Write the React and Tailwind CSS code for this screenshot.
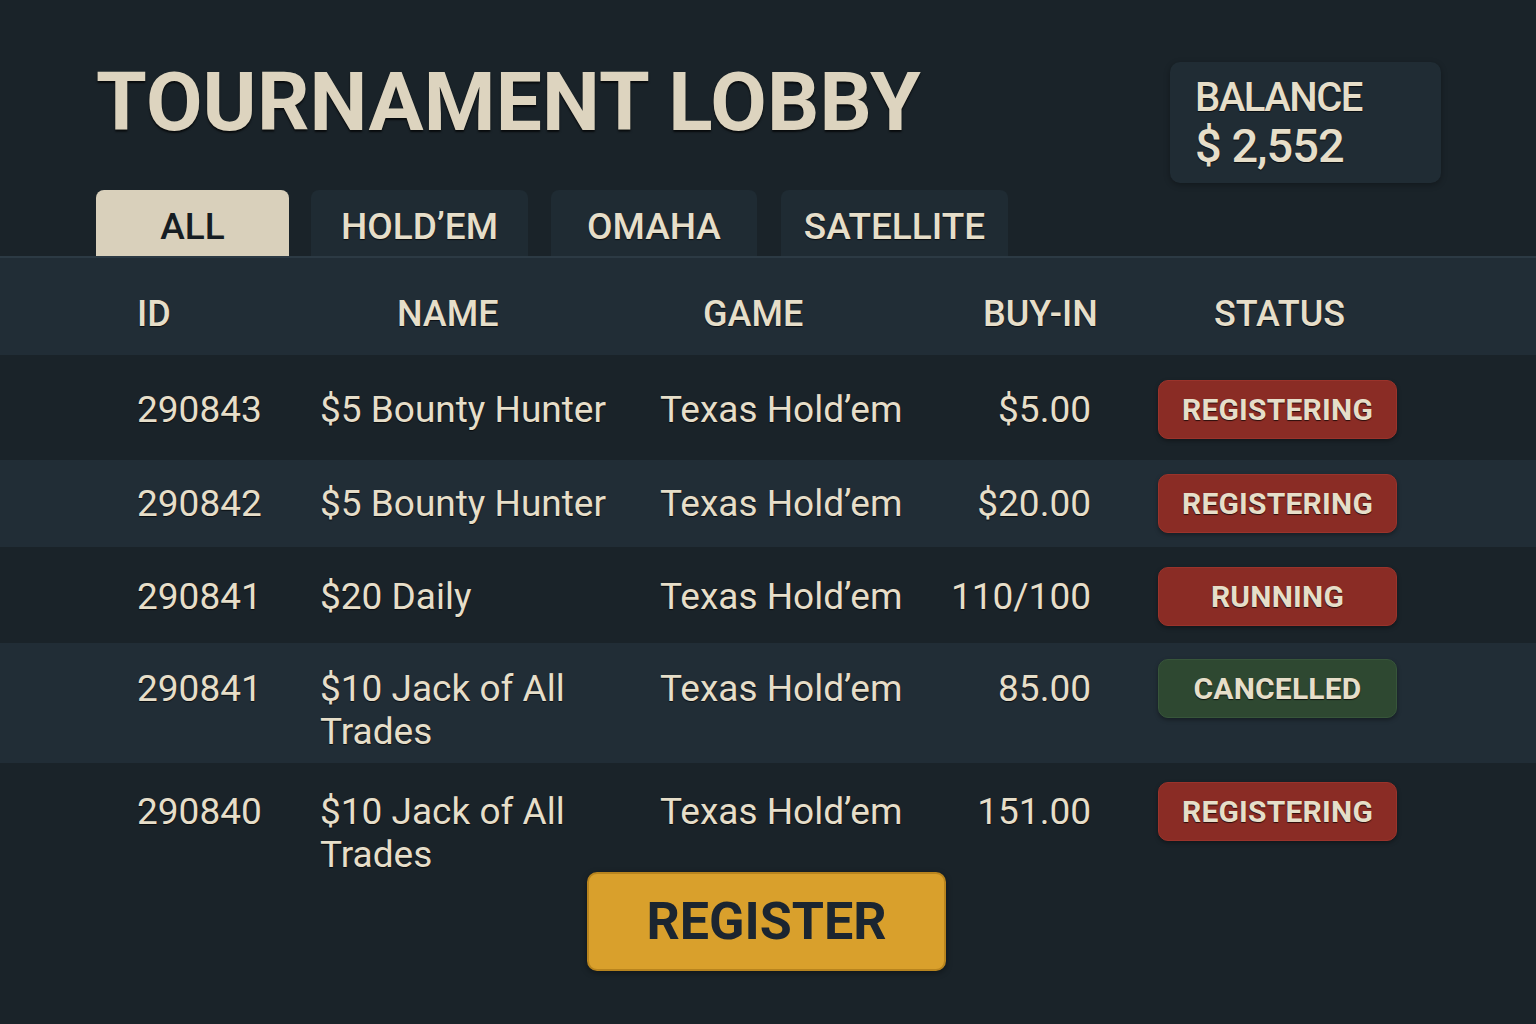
import React from "react";

const rows = [
  { id: "290843", name: ["$5 Bounty Hunter"], game: "Texas Hold’em", buy: "$5.00", status: "REGISTERING", h: "h-[105px]", pt: "pt-[25px]", light: false },
  { id: "290842", name: ["$5 Bounty Hunter"], game: "Texas Hold’em", buy: "$20.00", status: "REGISTERING", h: "h-[87px]", pt: "pt-[14px]", light: true },
  { id: "290841", name: ["$20 Daily"], game: "Texas Hold’em", buy: "110/100", status: "RUNNING", h: "h-[96px]", pt: "pt-[20px]", light: false },
  { id: "290841", name: ["$10 Jack of All", "Trades"], game: "Texas Hold’em", buy: "85.00", status: "CANCELLED", h: "h-[120px]", pt: "pt-[16px]", light: true },
  { id: "290840", name: ["$10 Jack of All", "Trades"], game: "Texas Hold’em", buy: "151.00", status: "REGISTERING", h: "h-[109px]", pt: "pt-[19px]", light: false },
];

const txt = "text-[#e6dec9] [text-shadow:0_1px_1px_rgba(0,0,0,0.7)]";

function Badge({ status }) {
  const green = status === "CANCELLED";
  return (
    <div
      className={`w-[239px] h-[59px] rounded-[10px] flex items-center justify-center text-[30px] font-bold tracking-[0.2px] ${txt} shadow-[0_2px_4px_rgba(0,0,0,0.35)] ${
        green ? "bg-[#2e4831] border border-[#37553a]" : "bg-[#8a2c25] border border-[#9a332b]"
      }`}
    >
      {status}
    </div>
  );
}

export default function App() {
  return (
    <div
      className="w-[1536px] h-[1024px] overflow-hidden bg-[#1a2329] flex flex-col"
      style={{ fontFamily: "Roboto, 'Noto Sans', sans-serif" }}
    >
      {/* top */}
      <div className="flex justify-between items-start pt-[62px] pl-[96px] pr-[95px]">
        <h1 className="mt-[-8px] text-[82px] leading-[96px] font-bold tracking-[0.2px] text-[#ddd4bf] [text-shadow:0_2px_2px_rgba(0,0,0,0.7)]">
          TOURNAMENT LOBBY
        </h1>
        <div className="w-[271px] h-[121px] rounded-[10px] bg-[#202c34] shadow-[0_2px_6px_rgba(0,0,0,0.3)] pl-[25px] pt-[14px] flex flex-col">
          <div className={`text-[40px] leading-[44px] font-medium tracking-[-1.5px] ${txt}`}>BALANCE</div>
          <div className={`text-[47px] leading-[52px] font-medium tracking-[-1px] ${txt}`}>$ 2,552</div>
        </div>
      </div>

      {/* tabs */}
      <div className="flex pl-[96px] mt-[7px] h-[66px] items-end">
        <div className="w-[193px] h-[66px] pt-[8px] rounded-t-[8px] bg-[#d9d0bb] flex items-center justify-center text-[37px] font-medium text-[#161d22]">
          ALL
        </div>
        <div className={`ml-[22px] w-[217px] h-[66px] pt-[8px] rounded-t-[8px] bg-[#1f2b33] flex items-center justify-center text-[37px] font-medium ${txt}`}>
          HOLD’EM
        </div>
        <div className={`ml-[23px] w-[206px] h-[66px] pt-[8px] rounded-t-[8px] bg-[#1f2b33] flex items-center justify-center text-[37px] font-medium ${txt}`}>
          OMAHA
        </div>
        <div className={`ml-[24px] w-[227px] h-[66px] pt-[8px] rounded-t-[8px] bg-[#1f2b33] flex items-center justify-center text-[37px] font-medium ${txt}`}>
          SATELLITE
        </div>
      </div>

      {/* table header */}
      <div className={`h-[99px] pt-[14px] bg-[#212d36] border-t-2 border-[#2c3a44] grid grid-cols-[260px_306px_280px_231px_1fr] pl-[137px] items-center text-[36px] font-medium ${txt}`}>
        <div>ID</div>
        <div>NAME</div>
        <div>GAME</div>
        <div>BUY-IN</div>
        <div>STATUS</div>
      </div>

      {/* rows */}
      {rows.map((r, i) => (
        <div
          key={i}
          className={`${r.h} ${r.pt} ${r.light ? "bg-[#212d36]" : "bg-[#1a2329]"} grid grid-cols-[183px_340px_260px_171px_306px] pl-[137px] items-start text-[37px] ${txt}`}
        >
          <div className="mt-[8px] leading-[43px]">{r.id}</div>
          <div className="mt-[8px] leading-[43px]">
            {r.name.map((n, j) => (
              <div key={j}>{n}</div>
            ))}
          </div>
          <div className="mt-[8px] leading-[43px]">{r.game}</div>
          <div className="mt-[8px] leading-[43px] text-right">{r.buy}</div>
          <div className="pl-[67px]">
            <Badge status={r.status} />
          </div>
        </div>
      ))}

      {/* register */}
      <div className="flex justify-center pr-[3px]">
        <button className="w-[359px] h-[99px] rounded-[10px] bg-[#d9a02c] border-2 border-[#b8841e] flex items-center justify-center text-[52px] font-bold text-[#1b2530] shadow-[0_2px_6px_rgba(0,0,0,0.4)]">
          REGISTER
        </button>
      </div>
    </div>
  );
}
